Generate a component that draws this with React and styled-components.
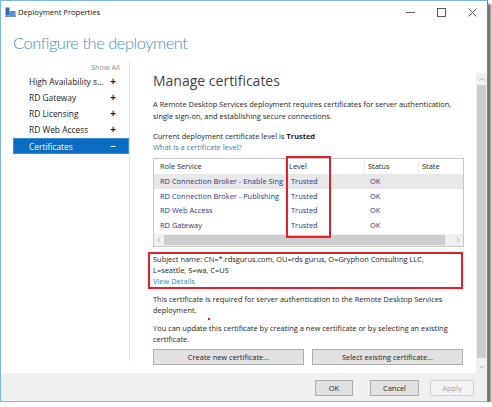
import React from "react";
import styled, { createGlobalStyle } from "styled-components";

const GlobalStyle = createGlobalStyle`
  *, *::before, *::after {
    box-sizing: border-box;
  }
  html, body {
    margin: 0;
    padding: 0;
    background: #ffffff;
  }
  body {
    font-family: "Open Sans", "Liberation Sans", sans-serif;
    color: #1e1e1e;
  }
`;

const Window = styled.div`
  width: 488px;
  height: 402px;
  border: 1px solid #7fb6e6;
  border-right-color: #3f8fd6;
  background: #fff;
  display: flex;
  flex-direction: column;
  box-shadow: 3px 4px 2px rgba(0, 0, 0, 0.55);
  overflow: hidden;
`;

const TitleBar = styled.div`
  height: 22px;
  flex: none;
  display: flex;
  align-items: center;
  padding-left: 4px;
  gap: 2px;
  font-size: 7.6px;
  color: #111;
`;

const TitleText = styled.span`
  flex: 1;
`;

const WinButton = styled.div`
  width: 29px;
  height: 22px;
  display: flex;
  align-items: center;
  justify-content: center;
`;

const Heading = styled.h1`
  margin: 8px 0 0 12px;
  height: 29px;
  flex: none;
  font-family: "Lato", "Open Sans", sans-serif;
  font-weight: 300;
  font-size: 16.4px;
  letter-spacing: -0.45px;
  line-height: 24px;
  color: #4490b8;
`;

const Body = styled.div`
  display: flex;
  height: 313px;
  flex: none;
`;

const Sidebar = styled.div`
  width: 117px;
  margin-left: 12px;
  margin-top: 2px;
  margin-bottom: 12px;
  border-right: 1px solid #e3e3e3;
  display: flex;
  flex-direction: column;
`;

const ShowAll = styled.div`
  text-align: right;
  font-size: 7.4px;
  color: #8a8a8a;
  padding: 0 9px 0 0;
  height: 10px;
  line-height: 10px;
  margin-bottom: 1px;
`;

const NavItem = styled.div`
  height: 16px;
  display: flex;
  align-items: center;
  justify-content: space-between;
  padding: 0 11px 0 15px;
  font-size: 8.4px;
  color: ${(p) => (p.active ? "#ffffff" : "#1a1a1a")};
  background: ${(p) => (p.active ? "#0a6cc2" : "transparent")};
  border: 1px solid ${(p) => (p.active ? "#3f8fd6" : "transparent")};
  margin-top: ${(p) => (p.active ? "1px" : "0")};
`;

const NavSign = styled.span`
  font-weight: 700;
  font-size: 10px;
  width: 8px;
  text-align: center;
`;

const ContentWrap = styled.div`
  flex: 1;
  display: flex;
`;

const Main = styled.div`
  flex: 1;
  padding: 12px 12px 0 23px;
  font-size: 7.45px;
  line-height: 11px;
  color: #1e1e1e;
`;

const SectionTitle = styled.h2`
  margin: 0 0 8px 0;
  font-weight: 400;
  font-size: 14px;
  line-height: 18px;
  color: #444;
`;

const Para = styled.p`
  margin: ${(p) => p.m || "0"};
  line-height: ${(p) => p.lh || "11px"};
`;

const Link = styled.div`
  color: #2d8bbd;
`;

const TableBox = styled.div`
  position: relative;
  margin-top: 5px;
  border: 1px solid #c7c7c7;
  height: 89px;
  width: 311px;
  display: flex;
  flex-direction: column;
`;

const Row = styled.div`
  display: grid;
  grid-template-columns: 132px 79px 54px 1fr;
  height: ${(p) => (p.head ? "15px" : "14.7px")};
  align-items: center;
  background: ${(p) => (p.selected ? "#e8e8e8" : "transparent")};
  color: ${(p) => (p.head ? "#1e1e1e" : "#26398a")};
`;

const Cell = styled.div`
  padding-left: ${(p) => p.pl || "6px"};
  white-space: nowrap;
  overflow: hidden;
  height: 100%;
  display: flex;
  align-items: center;
  border-right: ${(p) => (p.sep ? "1px solid #ececec" : "none")};
`;

const HScroll = styled.div`
  margin-top: auto;
  height: 12px;
  display: flex;
  align-items: center;
  background: #f0f0f0;
`;

const HArrow = styled.div`
  width: 10px;
  display: flex;
  align-items: center;
  justify-content: center;
`;

const HThumb = styled.div`
  flex: 1;
  height: 10px;
  background: #cdcdcd;
  margin-right: 8px;
`;

const Highlight = styled.div`
  position: absolute;
  left: 132px;
  top: -3px;
  width: 45px;
  height: 82px;
  border: 2px solid #e3202b;
`;

const SubjectBox = styled.div`
  margin: 5px 0 5px -5px;
  width: 315px;
  height: 37px;
  border: 2px solid #e3202b;
  padding: 0 3px;
  line-height: 11px;
`;

const Dot = styled.div`
  width: 2px;
  height: 2px;
  background: #e3202b;
  margin: 2px 0 3px 55px;
`;

const ButtonRow = styled.div`
  display: flex;
  gap: 8px;
  margin-top: 4px;
  width: 310px;
`;

const Button = styled.div`
  height: 16px;
  flex: ${(p) => (p.grow ? 1 : "none")};
  width: ${(p) => p.w || "auto"};
  display: flex;
  align-items: center;
  justify-content: center;
  border: 1px solid ${(p) => (p.disabled ? "#cfcfcf" : "#adadad")};
  color: ${(p) => (p.disabled ? "#a6a6a6" : "#1e1e1e")};
  background: ${(p) => (p.disabled ? "#f4f4f4" : "#e1e1e1")};
  font-size: 7.45px;
`;

const VScroll = styled.div`
  width: 11px;
  margin-top: 13px;
  display: flex;
  flex-direction: column;
  background: #f0f0f0;
`;

const VArrow = styled.div`
  height: 12px;
  display: flex;
  align-items: center;
  justify-content: center;
`;

const VThumb = styled.div`
  flex: 1;
  background: #cdcdcd;
  margin: 0 1px 3px;
`;

const Footer = styled.div`
  flex: 1;
  background: #f0f0f0;
  display: flex;
  justify-content: flex-end;
  align-items: center;
  padding: 2px 13px 0 0;
`;

const Chevron = ({ up, left, right }) => {
  let d = "M0.5 0.5 L3 3 L5.5 0.5";
  if (up) d = "M0.5 3.5 L3 1 L5.5 3.5";
  if (left) d = "M3 0.5 L0.8 3 L3 5.5";
  if (right) d = "M1 0.5 L3.2 3 L1 5.5";
  const side = left || right;
  return (
    <svg width={side ? 4 : 6} height={side ? 6 : 4} viewBox={side ? "0 0 4 6" : "0 0 6 4"}>
      <path d={d} stroke="#a6a6a6" strokeWidth="0.8" fill="none" />
    </svg>
  );
};

const AppIcon = () => (
  <svg width="11" height="10" viewBox="0 0 11 10">
    <rect x="0.5" y="0.5" width="4" height="8" fill="#2c6fb5" />
    <rect x="4.5" y="4" width="6" height="5" fill="#4e95d6" />
    <rect x="0" y="8.5" width="11" height="1.5" fill="#7a8ea4" />
  </svg>
);

const navItems = [
  "High Availability s...",
  "RD Gateway",
  "RD Licensing",
  "RD Web Access",
];

const roles = [
  "RD Connection Broker - Enable Sing",
  "RD Connection Broker - Publishing",
  "RD Web Access",
  "RD Gateway",
];

export default function App() {
  return (
    <>
      <GlobalStyle />
      <Window>
        <TitleBar>
          <AppIcon />
          <TitleText>Deployment Properties</TitleText>
          <WinButton>
            <svg width="9" height="9" viewBox="0 0 9 9">
              <path d="M0 4.5 H9" stroke="#333" strokeWidth="0.8" />
            </svg>
          </WinButton>
          <WinButton>
            <svg width="9" height="9" viewBox="0 0 9 9">
              <rect x="0.5" y="0.5" width="8" height="8" stroke="#333" strokeWidth="0.8" fill="none" />
            </svg>
          </WinButton>
          <WinButton>
            <svg width="9" height="9" viewBox="0 0 9 9">
              <path d="M0.5 0.5 L8.5 8.5 M8.5 0.5 L0.5 8.5" stroke="#333" strokeWidth="0.8" />
            </svg>
          </WinButton>
        </TitleBar>

        <Heading>Configure the deployment</Heading>

        <Body>
          <Sidebar>
            <ShowAll>Show All</ShowAll>
            {navItems.map((item) => (
              <NavItem key={item}>
                <span>{item}</span>
                <NavSign>+</NavSign>
              </NavItem>
            ))}
            <NavItem active>
              <span>Certificates</span>
              <NavSign>−</NavSign>
            </NavItem>
          </Sidebar>

          <ContentWrap>
            <Main>
              <SectionTitle>Manage certificates</SectionTitle>
              <Para lh="12px" m="0 0 9px 0">
                A Remote Desktop Services deployment requires certificates for server authentication,
                <br />
                single sign-on, and establishing secure connections.
              </Para>
              <Para>
                Current deployment certificate level is <b>Trusted</b>
              </Para>
              <Link>What is a certificate level?</Link>

              <TableBox>
                <Row head>
                  <Cell sep>Role Service</Cell>
                  <Cell sep pl="3px">Level</Cell>
                  <Cell sep pl="3px">Status</Cell>
                  <Cell pl="3px">State</Cell>
                </Row>
                {roles.map((role, i) => (
                  <Row key={role} selected={i === 0}>
                    <Cell>{role}</Cell>
                    <Cell pl="5px">Trusted</Cell>
                    <Cell pl="5px">OK</Cell>
                    <Cell />
                  </Row>
                ))}
                <HScroll>
                  <HArrow>
                    <Chevron left />
                  </HArrow>
                  <HThumb />
                  <HArrow>
                    <Chevron right />
                  </HArrow>
                </HScroll>
                <Highlight />
              </TableBox>

              <SubjectBox>
                Subject name: CN=*.rdsgurus.com, OU=rds gurus, O=Gryphon Consulting LLC,
                <br />
                L=seattle, S=wa, C=US
                <Link>View Details</Link>
              </SubjectBox>

              <Para>
                This certificate is required for server authentication to the Remote Desktop Services
                <br />
                deployment.
              </Para>
              <Dot />
              <Para>
                You can update this certificate by creating a new certificate or by selecting an existing
                <br />
                certificate.
              </Para>

              <ButtonRow>
                <Button grow>Create new certificate...</Button>
                <Button grow>Select existing certificate...</Button>
              </ButtonRow>
            </Main>
            <VScroll>
              <VArrow>
                <Chevron up />
              </VArrow>
              <VThumb />
              <VArrow>
                <Chevron />
              </VArrow>
            </VScroll>
          </ContentWrap>
        </Body>

        <Footer>
          <Button w="38px">OK</Button>
          <Button w="49px" style={{ marginLeft: 17 }}>Cancel</Button>
          <Button w="44px" disabled style={{ marginLeft: 11 }}>Apply</Button>
        </Footer>
      </Window>
    </>
  );
}
